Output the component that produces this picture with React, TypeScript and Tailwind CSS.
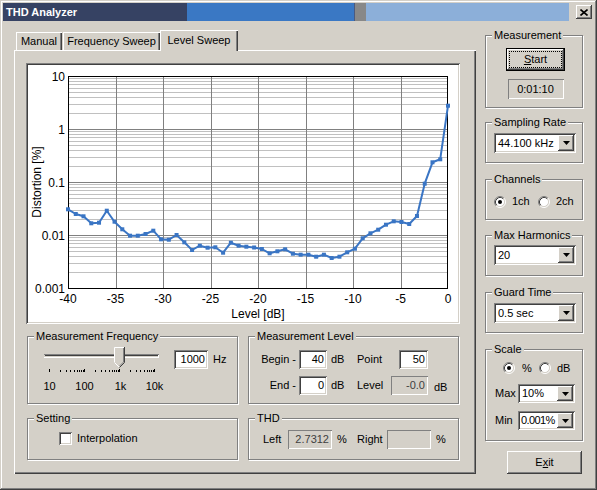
import React from 'react';

// Classic 3D edges
const sunken =
  'shadow-[inset_1px_1px_0_#808080,inset_-1px_-1px_0_#ffffff,inset_2px_2px_0_#404040,inset_-2px_-2px_0_#d4d0c8]';
const raised = 'shadow-[inset_-1px_-1px_0_#404040,inset_1px_1px_0_#ffffff,inset_-2px_-2px_0_#808080]';
const staticEdge = 'shadow-[inset_1px_1px_0_#808080,inset_-1px_-1px_0_#ffffff]';
const tabEdge = 'shadow-[inset_1px_1px_0_#ffffff,inset_-1px_0_0_#404040,inset_-2px_0_0_#808080]';

// distortion curve, y in page px, 50 points from -40 dB to 0 dB
const PTS = [
  209.3, 214, 216.3, 223.3, 222.7, 210.7, 221.7, 229.3, 235.7, 235.7, 234, 230.7, 239.3, 239.7, 235, 242.3, 250,
  245.7, 247.7, 247.3, 252.7, 242.7, 245.7, 246.7, 247.5, 249, 253.3, 251.3, 249.3, 253.7, 254.7, 254.7, 256.7,
  254.7, 258, 256.7, 252.3, 248.7, 238.3, 233.3, 229.7, 224.7, 221.3, 222, 224, 216, 183.7, 162.3, 159.3, 105.7,
];

function GroupBox({ label, className = '', children }: { label: string; className?: string; children?: React.ReactNode }) {
  return (
    <div className={`relative border border-[#808080] shadow-[inset_1px_1px_0_#ffffff,1px_1px_0_#ffffff] ${className}`}>
      <span className="absolute -top-[7px] left-[6px] whitespace-nowrap bg-[#d4d0c8] px-[2px] leading-[13px]">{label}</span>
      {children}
    </div>
  );
}

function Combo({ value, className = '', textClass = 'pl-[2px]' }: { value: string; className?: string; textClass?: string }) {
  return (
    <div className={`flex bg-white p-[2px] ${sunken} ${className}`}>
      <span className={`flex min-w-0 flex-1 items-center whitespace-nowrap ${textClass}`}>{value}</span>
      <span className={`flex w-[16px] shrink-0 items-center justify-center bg-[#d4d0c8] ${raised}`}>
        <svg width="7" height="4" viewBox="0 0 7 4">
          <path d="M0 0h7L3.5 4z" fill="#000" />
        </svg>
      </span>
    </div>
  );
}

function Radio({ checked }: { checked?: boolean }) {
  return (
    <svg width="12" height="12" viewBox="0 0 12 12" className="shrink-0">
      <circle cx="6" cy="6" r="4.5" fill="#fff" />
      <path d="M2.11 9.89A5.5 5.5 0 0 1 9.89 2.11" stroke="#808080" fill="none" />
      <path d="M9.89 2.11A5.5 5.5 0 0 1 2.11 9.89" stroke="#fff" fill="none" />
      <path d="M2.82 9.18A4.5 4.5 0 0 1 9.18 2.82" stroke="#404040" fill="none" />
      <path d="M9.18 2.82A4.5 4.5 0 0 1 2.82 9.18" stroke="#d4d0c8" fill="none" />
      {checked && <circle cx="6" cy="6" r="2" fill="#000" />}
    </svg>
  );
}

function Chart() {
  const px = (v: number) => Math.round(v) + 0.5;
  const decades = [0, 1, 2, 3, 4].map((k) => 76 + 53 * k);
  const minors: number[] = [];
  for (let k = 1; k <= 4; k++) {
    for (let m = 2; m <= 9; m++) minors.push(decades[k] - 53 * Math.log10(m));
  }
  const xs = PTS.map((_, i) => 68 + (i * 380) / 49);
  const line = PTS.map((y, i) => `${i ? 'L' : 'M'}${xs[i].toFixed(1)} ${y}`).join(' ');
  return (
    <svg width="430" height="257" viewBox="28 65 430 257" className="block">
      {minors.map((y, i) => (
        <line key={i} x1="68" x2="448" y1={px(y)} y2={px(y)} stroke="#c0c0c0" />
      ))}
      {decades.slice(1, 4).map((y) => (
        <line key={y} x1="68" x2="448" y1={y + 0.5} y2={y + 0.5} stroke="#808080" />
      ))}
      {[1, 2, 3, 4, 5, 6, 7].map((k) => (
        <line key={k} x1={px(68 + 47.5 * k)} x2={px(68 + 47.5 * k)} y1="76" y2="288" stroke="#808080" />
      ))}
      <rect x="68.5" y="76.5" width="379" height="212" fill="none" stroke="#000" />
      <path d={line} fill="none" stroke="#3a75c4" strokeWidth="2" strokeLinejoin="round" />
      {PTS.map((y, i) => (
        <rect key={i} x={xs[i] - 2} y={y - 2} width="4" height="4" fill="#3a75c4" />
      ))}
      <g fontSize="12" fill="#000">
        {['10', '1', '0.1', '0.01', '0.001'].map((t, k) => (
          <text key={t} x="65" y={decades[k] + 5} textAnchor="end">
            {t}
          </text>
        ))}
        {['-40', '-35', '-30', '-25', '-20', '-15', '-10', '-5', '0'].map((t, k) => (
          <text key={t} x={68 + 47.5 * k} y="303" textAnchor="middle">
            {t}
          </text>
        ))}
        <text x="258" y="318" textAnchor="middle">
          Level [dB]
        </text>
        <text x="41" y="182" textAnchor="middle" transform="rotate(-90 41 182)">
          Distortion [%]
        </text>
      </g>
    </svg>
  );
}

function FreqSlider() {
  const fx = (f: number) => Math.round(49.3 + 35 * Math.log10(f / 10)) + 0.5;
  const ticks: number[] = [];
  [10, 100, 1000].forEach((d) => {
    for (let m = 1; m <= 9; m++) ticks.push(d * m);
  });
  ticks.push(10000);
  return (
    <svg width="130" height="48" viewBox="40 345 130 48" className="block shrink-0">
      <line x1="44" x2="159" y1="354.5" y2="354.5" stroke="#808080" />
      <line x1="45" x2="158" y1="355.5" y2="355.5" stroke="#404040" />
      <line x1="44" x2="159" y1="357.5" y2="357.5" stroke="#fff" />
      <line x1="158.5" x2="158.5" y1="355" y2="357" stroke="#fff" />
      {ticks.map((f) => {
        const major = [10, 100, 1000, 10000].includes(f);
        return <line key={f} x1={fx(f)} x2={fx(f)} y1={major ? 369 : 370} y2="372" stroke="#000" />;
      })}
      <polygon points="114,347 124,347 124,362 119,367 114,362" fill="#d4d0c8" />
      <path d="M114.5 362V347.5H124M114.5 362.5L119 367" stroke="#fff" fill="none" />
      <path d="M123.5 348V362L119.5 366" stroke="#808080" fill="none" />
      <path d="M124.5 347V362.5L119.5 367.5" stroke="#404040" fill="none" />
      <g fontSize="11" fill="#000" textAnchor="middle">
        <text x={fx(10)} y="389.5">10</text>
        <text x={fx(100)} y="389.5">100</text>
        <text x={fx(1000) + 1} y="389.5">1k</text>
        <text x={fx(10000)} y="389.5">10k</text>
      </g>
    </svg>
  );
}

export default function App() {
  return (
    <div className="h-[490px] w-[597px] overflow-hidden bg-[#d4d0c8] p-[3px] font-['Liberation_Sans',Arial,sans-serif] text-[11px] leading-[13px] text-black shadow-[inset_-1px_-1px_0_#404040,inset_1px_1px_0_#d4d0c8,inset_-2px_-2px_0_#808080,inset_2px_2px_0_#ffffff]">
      {/* Title bar */}
      <div className="flex h-[18px]">
        <div className="flex w-[184px] items-center bg-[#364263] pl-[3px] font-bold text-white">THD Analyzer</div>
        <div className="w-[167px] bg-[#3a78c4]" />
        <div className="w-[1px] bg-[#4a5a80]" />
        <div className="w-[11px] bg-[#888888]" />
        <div className="w-[203px] bg-[#8cafd9]" />
        <div className="flex flex-1 items-center justify-end pr-[2px]">
          <div className={`flex h-[14px] w-[16px] items-center justify-center bg-[#d4d0c8] ${raised}`}>
            <svg width="8" height="7" viewBox="0 0 8 7">
              <path d="M0.5 0.5L7.5 6.5M7.5 0.5L0.5 6.5" stroke="#000" strokeWidth="1.6" />
            </svg>
          </div>
        </div>
      </div>

      <div className="flex items-start">
        {/* Tabs + panel */}
        <div className="ml-[11px] mt-[9px] w-[462px]">
          <div className="flex h-[20px] items-end pl-[2px]">
            <div className={`flex h-[18px] w-[46px] items-center justify-center ${tabEdge}`}>Manual</div>
            <div className={`ml-[1px] flex h-[18px] w-[97px] items-center justify-center ${tabEdge}`}>Frequency Sweep</div>
            <div className={`relative z-10 -mb-[1px] flex h-[21px] w-[78px] items-center justify-center bg-[#d4d0c8] pb-[1px] ${tabEdge}`}>
              Level Sweep
            </div>
          </div>
          <div className="h-[424px] pl-[12px] pt-[13px] shadow-[inset_1px_1px_0_#ffffff,inset_-1px_-1px_0_#404040,inset_-2px_-2px_0_#808080]">
            <div className={`h-[261px] w-[434px] bg-white p-[2px] ${sunken}`}>
              <Chart />
            </div>

            <div className="ml-[1px] mt-[12px] flex gap-[10px]">
              <GroupBox label="Measurement Frequency" className="h-[68px] w-[211px]">
                <div className="flex pl-[12px] pt-[8px]">
                  <FreqSlider />
                  <div className="ml-[4px] mt-[5px] flex h-[19px] items-center">
                    <div className={`flex h-[19px] w-[34px] items-center justify-end bg-white pr-[3px] ${sunken}`}>1000</div>
                    <span className="ml-[5px]">Hz</span>
                  </div>
                </div>
              </GroupBox>
              <GroupBox label="Measurement Level" className="h-[68px] w-[211px]">
                <div className="flex flex-col pt-[13px]">
                  <div className="flex h-[19px] items-center">
                    <span className="w-[47px] text-right">Begin -</span>
                    <div className={`ml-[3px] flex h-[19px] w-[28px] items-center justify-end bg-white pr-[3px] ${sunken}`}>40</div>
                    <span className="ml-[4px] w-[26px]">dB</span>
                    <span className="w-[42px]">Point</span>
                    <div className={`flex h-[19px] w-[29px] items-center justify-end bg-white pr-[3px] ${sunken}`}>50</div>
                  </div>
                  <div className="mt-[7px] flex h-[19px] items-center">
                    <span className="w-[47px] text-right">End -</span>
                    <div className={`ml-[3px] flex h-[19px] w-[28px] items-center justify-end bg-white pr-[3px] ${sunken}`}>0</div>
                    <span className="ml-[4px] w-[26px]">dB</span>
                    <span className="w-[34px]">Level</span>
                    <div className={`flex h-[19px] w-[37px] items-center justify-end pr-[3px] text-[#404040] ${staticEdge}`}>-0.0</div>
                    <span className="ml-[6px] mt-[3px]">dB</span>
                  </div>
                </div>
              </GroupBox>
            </div>

            <div className="ml-[1px] mt-[14px] flex gap-[10px]">
              <GroupBox label="Setting" className="h-[42px] w-[211px]">
                <div className="flex items-center pl-[31px] pt-[13px]">
                  <div className={`h-[13px] w-[13px] bg-white ${sunken}`} />
                  <span className="ml-[5px]">Interpolation</span>
                </div>
              </GroupBox>
              <GroupBox label="THD" className="h-[42px] w-[211px]">
                <div className="flex items-center pl-[14px] pt-[11px]">
                  <span className="w-[25px]">Left</span>
                  <div className={`flex h-[19px] w-[44px] items-center justify-end pr-[3px] text-[#404040] ${staticEdge}`}>2.7312</div>
                  <span className="ml-[5px] w-[20px]">%</span>
                  <span className="w-[30px]">Right</span>
                  <div className={`h-[19px] w-[44px] ${staticEdge}`} />
                  <span className="ml-[5px]">%</span>
                </div>
              </GroupBox>
            </div>
          </div>
        </div>

        {/* Right column */}
        <div className="ml-[9px] mt-[14px] flex w-[98px] flex-col">
          <GroupBox label="Measurement" className="flex h-[73px] flex-col items-center pl-[3px] pt-[12px]">
            <button className={`flex h-[23px] w-[59px] border border-black bg-[#d4d0c8] p-[2px] ${raised}`}>
              <span className="flex flex-1 items-center justify-center border border-dotted border-black">
                <span className="underline">S</span>tart
              </span>
            </button>
            <div className={`mt-[8px] flex h-[20px] w-[56px] items-center justify-center ${staticEdge}`}>0:01:10</div>
          </GroupBox>

          <GroupBox label="Sampling Rate" className="mt-[14px] h-[41px] pl-[8px] pt-[10px]">
            <Combo value="44.100 kHz" className="h-[20px] w-[82px]" />
          </GroupBox>

          <GroupBox label="Channels" className="mt-[16px] h-[41px]">
            <div className="flex items-center pl-[8px] pt-[15px]">
              <Radio checked />
              <span className="ml-[6px] w-[20px]">1ch</span>
              <span className="ml-[6px]">
                <Radio />
              </span>
              <span className="ml-[6px]">2ch</span>
            </div>
          </GroupBox>

          <GroupBox label="Max Harmonics" className="mt-[15px] h-[41px] pl-[8px] pt-[9px]">
            <Combo value="20" className="h-[20px] w-[82px]" />
          </GroupBox>

          <GroupBox label="Guard Time" className="mt-[16px] h-[41px] pl-[8px] pt-[10px]">
            <Combo value="0.5 sec" className="h-[20px] w-[82px]" />
          </GroupBox>

          <GroupBox label="Scale" className="mt-[16px] h-[92px]">
            <div className="mt-[12px] flex h-[12px] items-center pl-[17px]">
              <Radio checked />
              <span className="ml-[7px] w-[17px]">%</span>
              <Radio />
              <span className="ml-[6px]">dB</span>
            </div>
            <div className="mt-[10px] flex items-center pl-[9px]">
              <span className="w-[23px]">Max</span>
              <Combo value="10%" className="h-[19px] w-[57px]" />
            </div>
            <div className="mt-[8px] flex items-center pl-[9px]">
              <span className="w-[23px]">Min</span>
              <Combo value="0.001%" className="h-[19px] w-[57px]" textClass="pl-[1px] tracking-[-0.6px]" />
            </div>
          </GroupBox>

          <button className={`ml-[22px] mt-[10px] flex h-[23px] w-[75px] items-center justify-center bg-[#d4d0c8] ${raised}`}>
            <span>
              E<span className="underline">x</span>it
            </span>
          </button>
        </div>
      </div>
    </div>
  );
}
